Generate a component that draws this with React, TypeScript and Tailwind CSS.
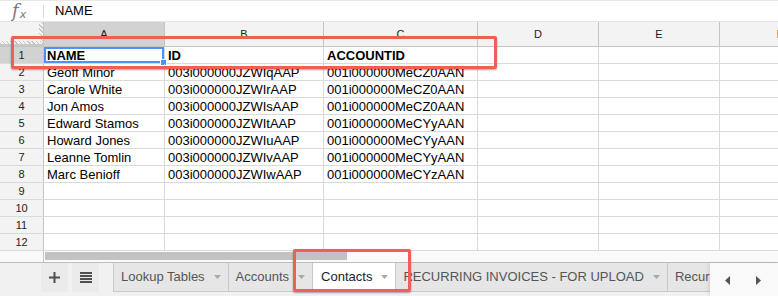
import React from "react";

const data: string[][] = [
  ["NAME", "ID", "ACCOUNTID"],
  ["Geoff Minor", "003i000000JZWIqAAP", "001i000000MeCZ0AAN"],
  ["Carole White", "003i000000JZWIrAAP", "001i000000MeCZ0AAN"],
  ["Jon Amos", "003i000000JZWIsAAP", "001i000000MeCZ0AAN"],
  ["Edward Stamos", "003i000000JZWItAAP", "001i000000MeCYyAAN"],
  ["Howard Jones", "003i000000JZWIuAAP", "001i000000MeCYyAAN"],
  ["Leanne Tomlin", "003i000000JZWIvAAP", "001i000000MeCYyAAN"],
  ["Marc Benioff", "003i000000JZWIwAAP", "001i000000MeCYzAAN"],
];

const colWidths = ["w-[121px]", "w-[159px]", "w-[154px]", "w-[121px]", "w-[121px]", "w-[121px]"];
const letters = ["A", "B", "C", "D", "E", "F"];

function Caret({ color = "#a8a8a8" }: { color?: string }) {
  return (
    <svg width="7" height="4" viewBox="0 0 7 4" className="ml-[9px] shrink-0">
      <path d="M0 0 H7 L3.5 4 Z" fill={color} />
    </svg>
  );
}

function Tab({ label, active = false }: { label: string; active?: boolean }) {
  return (
    <div
      className={
        active
          ? "flex h-[29px] shrink-0 items-center whitespace-nowrap border-b border-l border-[#c9c9c9] bg-white pl-[8px] pr-[7px] text-[13px] text-[#222]"
          : "flex h-[29px] shrink-0 items-center whitespace-nowrap border-b border-l border-[#c9c9c9] bg-[#e6e6e6] pl-[7px] pr-[7px] text-[13px] text-[#555]"
      }
    >
      <span>{label}</span>
      <Caret />
    </div>
  );
}

export default function App() {
  const rows = Array.from({ length: 12 }, (_, i) => i);
  return (
    <div className="relative h-[296px] w-[778px] overflow-hidden bg-white font-['Liberation_Sans',Arial,sans-serif]">
      {/* Formula bar */}
      <div className="flex h-[22px] items-center border-t border-b border-t-[#e8e8e8] border-b-[#e3e3e3] bg-white">
        <div className="flex w-[43px] items-end pl-[12px] text-[#7a7a7a]">
          <span className="font-['DejaVu_Serif',serif] text-[18px] italic leading-none">f</span>
          <span className="ml-[1px] font-['DejaVu_Sans',sans-serif] text-[11px] italic leading-none">x</span>
        </div>
        <div className="h-[13px] w-px bg-[#d8d8d8]" />
        <div className="pl-[11px] text-[13px] text-black">NAME</div>
      </div>

      {/* Column headers */}
      <div className="flex h-[25px] border-b border-[#c4c4c4] bg-[#f3f3f3]">
        <div className="relative w-[44px] shrink-0 border-r border-[#c4c4c4] bg-[#f3f3f3]">
          <div className="absolute right-0 top-0 h-[20px] w-[4px] bg-[repeating-linear-gradient(45deg,#c4c4c4_0,#c4c4c4_1px,#f3f3f3_1px,#f3f3f3_3px)]" />
          <div className="absolute bottom-[2px] left-0 h-[3px] w-full bg-[repeating-linear-gradient(45deg,#c4c4c4_0,#c4c4c4_1px,#f3f3f3_1px,#f3f3f3_3px)]" />
          <div className="absolute bottom-0 left-0 h-[2px] w-full bg-[#c8c8c8]" />
        </div>
        {letters.map((l, i) => (
          <div
            key={l}
            className={`${colWidths[i]} flex shrink-0 items-center justify-center border-r border-[#c4c4c4] text-[11px] text-[#222] ${
              i === 0 ? "bg-[#d2d2d2]" : ""
            }`}
          >
            {l}
          </div>
        ))}
      </div>

      {/* Rows */}
      {rows.map((r) => (
        <div key={r} className="flex h-[17px] border-b border-[#dadada]">
          <div
            className={`flex w-[44px] shrink-0 items-center justify-center border-r border-[#c4c4c4] text-[11px] text-[#222] ${
              r === 0 ? "bg-[#d2d2d2]" : "bg-[#f3f3f3]"
            }`}
          >
            {r + 1}
          </div>
          {letters.map((l, c) => {
            const txt = data[r] && c < 3 ? data[r][c] : "";
            return (
              <div
                key={l}
                className={`${colWidths[c]} relative shrink-0 overflow-visible whitespace-nowrap border-r border-[#dadada] px-[3px] pt-[1px] text-[13px] leading-[16px] text-black ${
                  r === 0 ? "font-bold" : ""
                }`}
              >
                {txt}
                {r === 0 && c === 0 && (
                  <div className="absolute inset-0 border-2 border-[#4d90fe]">
                    <div className="absolute bottom-[-5px] right-[-5px] h-[7px] w-[7px] border border-white bg-[#4d90fe]" />
                  </div>
                )}
              </div>
            );
          })}
        </div>
      ))}

      {/* Horizontal scrollbar */}
      <div className="flex h-[12px] border-b border-[#bdbdbd] bg-[#fafafa]">
        <div className="w-[44px] shrink-0 border-r border-[#c4c4c4] bg-[#f9f9f9]" />
        <div className="flex-1 pl-[1px] pt-[1px]">
          <div className="h-[8px] w-[302px] bg-[#c2c2c2]" />
        </div>
      </div>

      {/* Sheet tabs bar */}
      <div className="flex h-[33px] bg-[#f1f1f1]">
        <div className="w-[41px] shrink-0" />
        <div className="flex h-[29px] w-[27px] shrink-0 items-center justify-center bg-[#ebebeb]">
          <svg width="11" height="11" viewBox="0 0 11 11">
            <rect x="4.5" y="0" width="2" height="11" fill="#4f4f4f" />
            <rect x="0" y="4.5" width="11" height="2" fill="#4f4f4f" />
          </svg>
        </div>
        <div className="w-[4px] shrink-0" />
        <div className="flex h-[29px] w-[27px] shrink-0 items-center justify-center bg-[#ebebeb]">
          <svg width="12" height="11" viewBox="0 0 12 11">
            <rect x="0" y="0" width="12" height="2" fill="#4f4f4f" />
            <rect x="0" y="3" width="12" height="2" fill="#4f4f4f" />
            <rect x="0" y="6" width="12" height="2" fill="#4f4f4f" />
            <rect x="0" y="9" width="12" height="2" fill="#4f4f4f" />
          </svg>
        </div>
        <div className="w-[14px] shrink-0" />
        <div className="flex min-w-0 flex-1 overflow-hidden">
          <Tab label="Lookup Tables" />
          <Tab label="Accounts" />
          <Tab label="Contacts" active />
          <Tab label="RECURRING INVOICES - FOR UPLOAD" />
          <Tab label="Recurring Invoices" />
        </div>
        <div className="flex h-full w-[68px] shrink-0 items-center bg-[#f9f9f9] pl-[15px] shadow-[-2px_0_3px_rgba(0,0,0,0.08)]">
          <svg width="5" height="9" viewBox="0 0 5 9" className="mt-[2px]">
            <path d="M5 0 V9 L0 4.5 Z" fill="#555" />
          </svg>
          <svg width="5" height="9" viewBox="0 0 5 9" className="ml-[26px] mt-[2px]">
            <path d="M0 0 V9 L5 4.5 Z" fill="#555" />
          </svg>
        </div>
      </div>

      {/* Annotation boxes */}
      <div className="absolute left-[11px] top-[36px] h-[33px] w-[486px] rounded-[2px] border-[3px] border-[#ef5f56] shadow-[0_1px_2px_rgba(0,0,0,0.35)]" />
      <div className="absolute left-[293px] top-[249px] h-[43px] w-[118px] rounded-[2px] border-[3px] border-[#ef5f56] shadow-[0_1px_2px_rgba(0,0,0,0.35)]" />
    </div>
  );
}
